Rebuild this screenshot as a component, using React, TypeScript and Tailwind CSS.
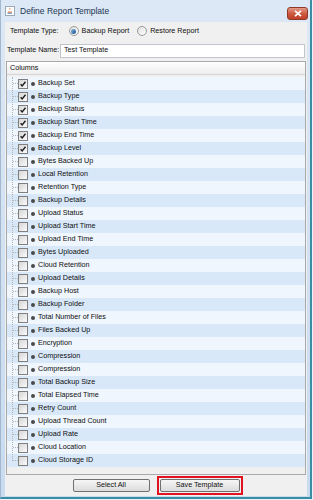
import React from "react";

const items: { label: string; checked: boolean }[] = [
  { label: "Backup Set", checked: true },
  { label: "Backup Type", checked: true },
  { label: "Backup Status", checked: true },
  { label: "Backup Start Time", checked: true },
  { label: "Backup End Time", checked: true },
  { label: "Backup Level", checked: true },
  { label: "Bytes Backed Up", checked: false },
  { label: "Local Retention", checked: false },
  { label: "Retention Type", checked: false },
  { label: "Backup Details", checked: false },
  { label: "Upload Status", checked: false },
  { label: "Upload Start Time", checked: false },
  { label: "Upload End Time", checked: false },
  { label: "Bytes Uploaded", checked: false },
  { label: "Cloud Retention", checked: false },
  { label: "Upload Details", checked: false },
  { label: "Backup Host", checked: false },
  { label: "Backup Folder", checked: false },
  { label: "Total Number of Files", checked: false },
  { label: "Files Backed Up", checked: false },
  { label: "Encryption", checked: false },
  { label: "Compression", checked: false },
  { label: "Compression", checked: false },
  { label: "Total Backup Size", checked: false },
  { label: "Total Elapsed Time", checked: false },
  { label: "Retry Count", checked: false },
  { label: "Upload Thread Count", checked: false },
  { label: "Upload Rate", checked: false },
  { label: "Cloud Location", checked: false },
  { label: "Cloud Storage ID", checked: false },
];

function CheckBox({ checked }: { checked: boolean }) {
  return (
    <div className="w-[10px] h-[10px] border border-[#7f7f7f] bg-white flex items-center justify-center shrink-0">
      <div className="w-[8px] h-[8px] bg-gradient-to-br from-[#d6d6d6] to-[#fbfbfb] flex items-center justify-center">
        {checked && (
          <svg width="8" height="8" viewBox="0 0 8 8">
            <path d="M1.6 4.2 L3.2 5.9 L6.5 1.8" fill="none" stroke="#1e1e1e" strokeWidth="1.4" />
          </svg>
        )}
      </div>
    </div>
  );
}

function Radio({ selected }: { selected: boolean }) {
  return (
    <div className="w-[10px] h-[10px] rounded-full border border-[#9a9a9a] bg-gradient-to-br from-[#e0e0e0] to-[#ffffff] flex items-center justify-center shrink-0">
      {selected && (
        <div className="w-[5px] h-[5px] rounded-full bg-gradient-to-br from-[#7fb9e8] to-[#1a4f86]" />
      )}
    </div>
  );
}

export default function App() {
  const font = { fontFamily: '"Liberation Sans", Arial, sans-serif' };
  return (
    <div className="w-[313px] h-[500px] bg-[#e9f0f8] overflow-hidden" style={font}>
      <div className="w-[312px] h-[499px] flex flex-col border-l border-[#a3b8cf] border-r-2 border-b-2 border-r-[#3a8da2] border-b-[#3a8da2] bg-gradient-to-b from-[#dce8f5] to-[#c8dbef]">
        {/* Title bar */}
        <div className="h-[22px] flex items-center pl-[4px] pr-[2px] shrink-0">
          <svg width="10" height="10" viewBox="0 0 10 10" className="shrink-0">
            <rect x="0.5" y="0.5" width="9" height="9" fill="#ffffff" stroke="#9aa9b8" />
            <path d="M2.5 6.5 h4.5 v1.2 h-4.5 z" fill="#5a7fb0" />
            <path d="M3 5.8 Q5 6.6 6.8 5.8" fill="none" stroke="#e06a2a" strokeWidth="0.9" />
            <path d="M5 1.5 Q4 3 5 4.2 Q5.8 3 5 1.5" fill="#e0492a" />
          </svg>
          <span className="ml-[5px] text-[8.5px] text-[#1c3553] leading-none">Define Report Template</span>
          <div className="ml-auto mt-[4px] w-[21px] h-[13px] rounded-[3px] border border-[#8d3a2c] bg-gradient-to-b from-[#e29a88] via-[#cf5a43] to-[#c13f27] flex items-center justify-center">
            <svg width="8" height="7" viewBox="0 0 8 7">
              <path d="M1 0.8 L7 6.2 M7 0.8 L1 6.2" stroke="#ffffff" strokeWidth="1.7" />
            </svg>
          </div>
        </div>
        {/* Content */}
        <div className="flex-1 ml-[4px] mr-[3px] mb-[1px] bg-[#f0f0f0] flex flex-col text-[#0e0e0e] text-[7.2px]">
          <div className="h-[19px] flex items-center pl-[5px] shrink-0">
            <span>Template Type:</span>
            <div className="ml-[10px] flex items-center">
              <Radio selected={true} />
              <span className="ml-[3px]">Backup Report</span>
            </div>
            <div className="ml-[8px] flex items-center">
              <Radio selected={false} />
              <span className="ml-[3px]">Restore Report</span>
            </div>
          </div>
          <div className="h-[19px] flex items-center pl-[2px] pr-[2px] shrink-0">
            <span className="w-[53px] shrink-0">Template Name:</span>
            <div className="flex-1 h-[14px] bg-white border border-[#c2c6cc] flex items-center pl-[3px]">
              Test Template
            </div>
          </div>
          {/* Columns panel */}
          <div className="mx-[1px] mt-[1px] h-[414px] border border-[#a9a9a9] bg-[#f0f0f0] flex flex-col shrink-0">
            <div className="h-[13px] flex items-center pl-[3px] bg-gradient-to-b from-[#ffffff] to-[#eeeeee] border-b border-[#d5d5d5] shrink-0">
              Columns
            </div>
            <div className="relative mt-[2px] flex flex-col">
              <div className="absolute left-[5px] top-0 h-[384px] border-l border-dotted border-[#b4b4b4]" />
              {items.map((it, i) => (
                <div
                  key={i}
                  className={`h-[13px] flex items-center ${i % 2 === 0 ? "bg-[#f0f6fd]" : "bg-[#d8e8f9]"}`}
                >
                  <div className="w-[6px] shrink-0" />
                  <div className="w-[5px] border-t border-dotted border-[#b4b4b4] shrink-0" />
                  <CheckBox checked={it.checked} />
                  <div className="ml-[3px] w-[4px] h-[4px] rounded-full bg-[#4a4a4a] shrink-0" />
                  <span className="ml-[3px]">{it.label}</span>
                </div>
              ))}
            </div>
          </div>
          {/* Buttons */}
          <div className="flex-1 flex items-center justify-center gap-[4px]">
            <div className="p-[1px] border-2 border-transparent">
              <div className="w-[77px] h-[13px] border border-[#707070] rounded-[2px] bg-gradient-to-b from-[#f6f6f6] to-[#dcdcdc] flex items-center justify-center">
                Select All
              </div>
            </div>
            <div className="p-[1px] border-2 border-[#e0141e]">
              <div className="w-[80px] h-[13px] border border-[#707070] rounded-[2px] bg-gradient-to-b from-[#f6f6f6] to-[#dcdcdc] flex items-center justify-center">
                Save Template
              </div>
            </div>
          </div>
        </div>
      </div>
    </div>
  );
}
